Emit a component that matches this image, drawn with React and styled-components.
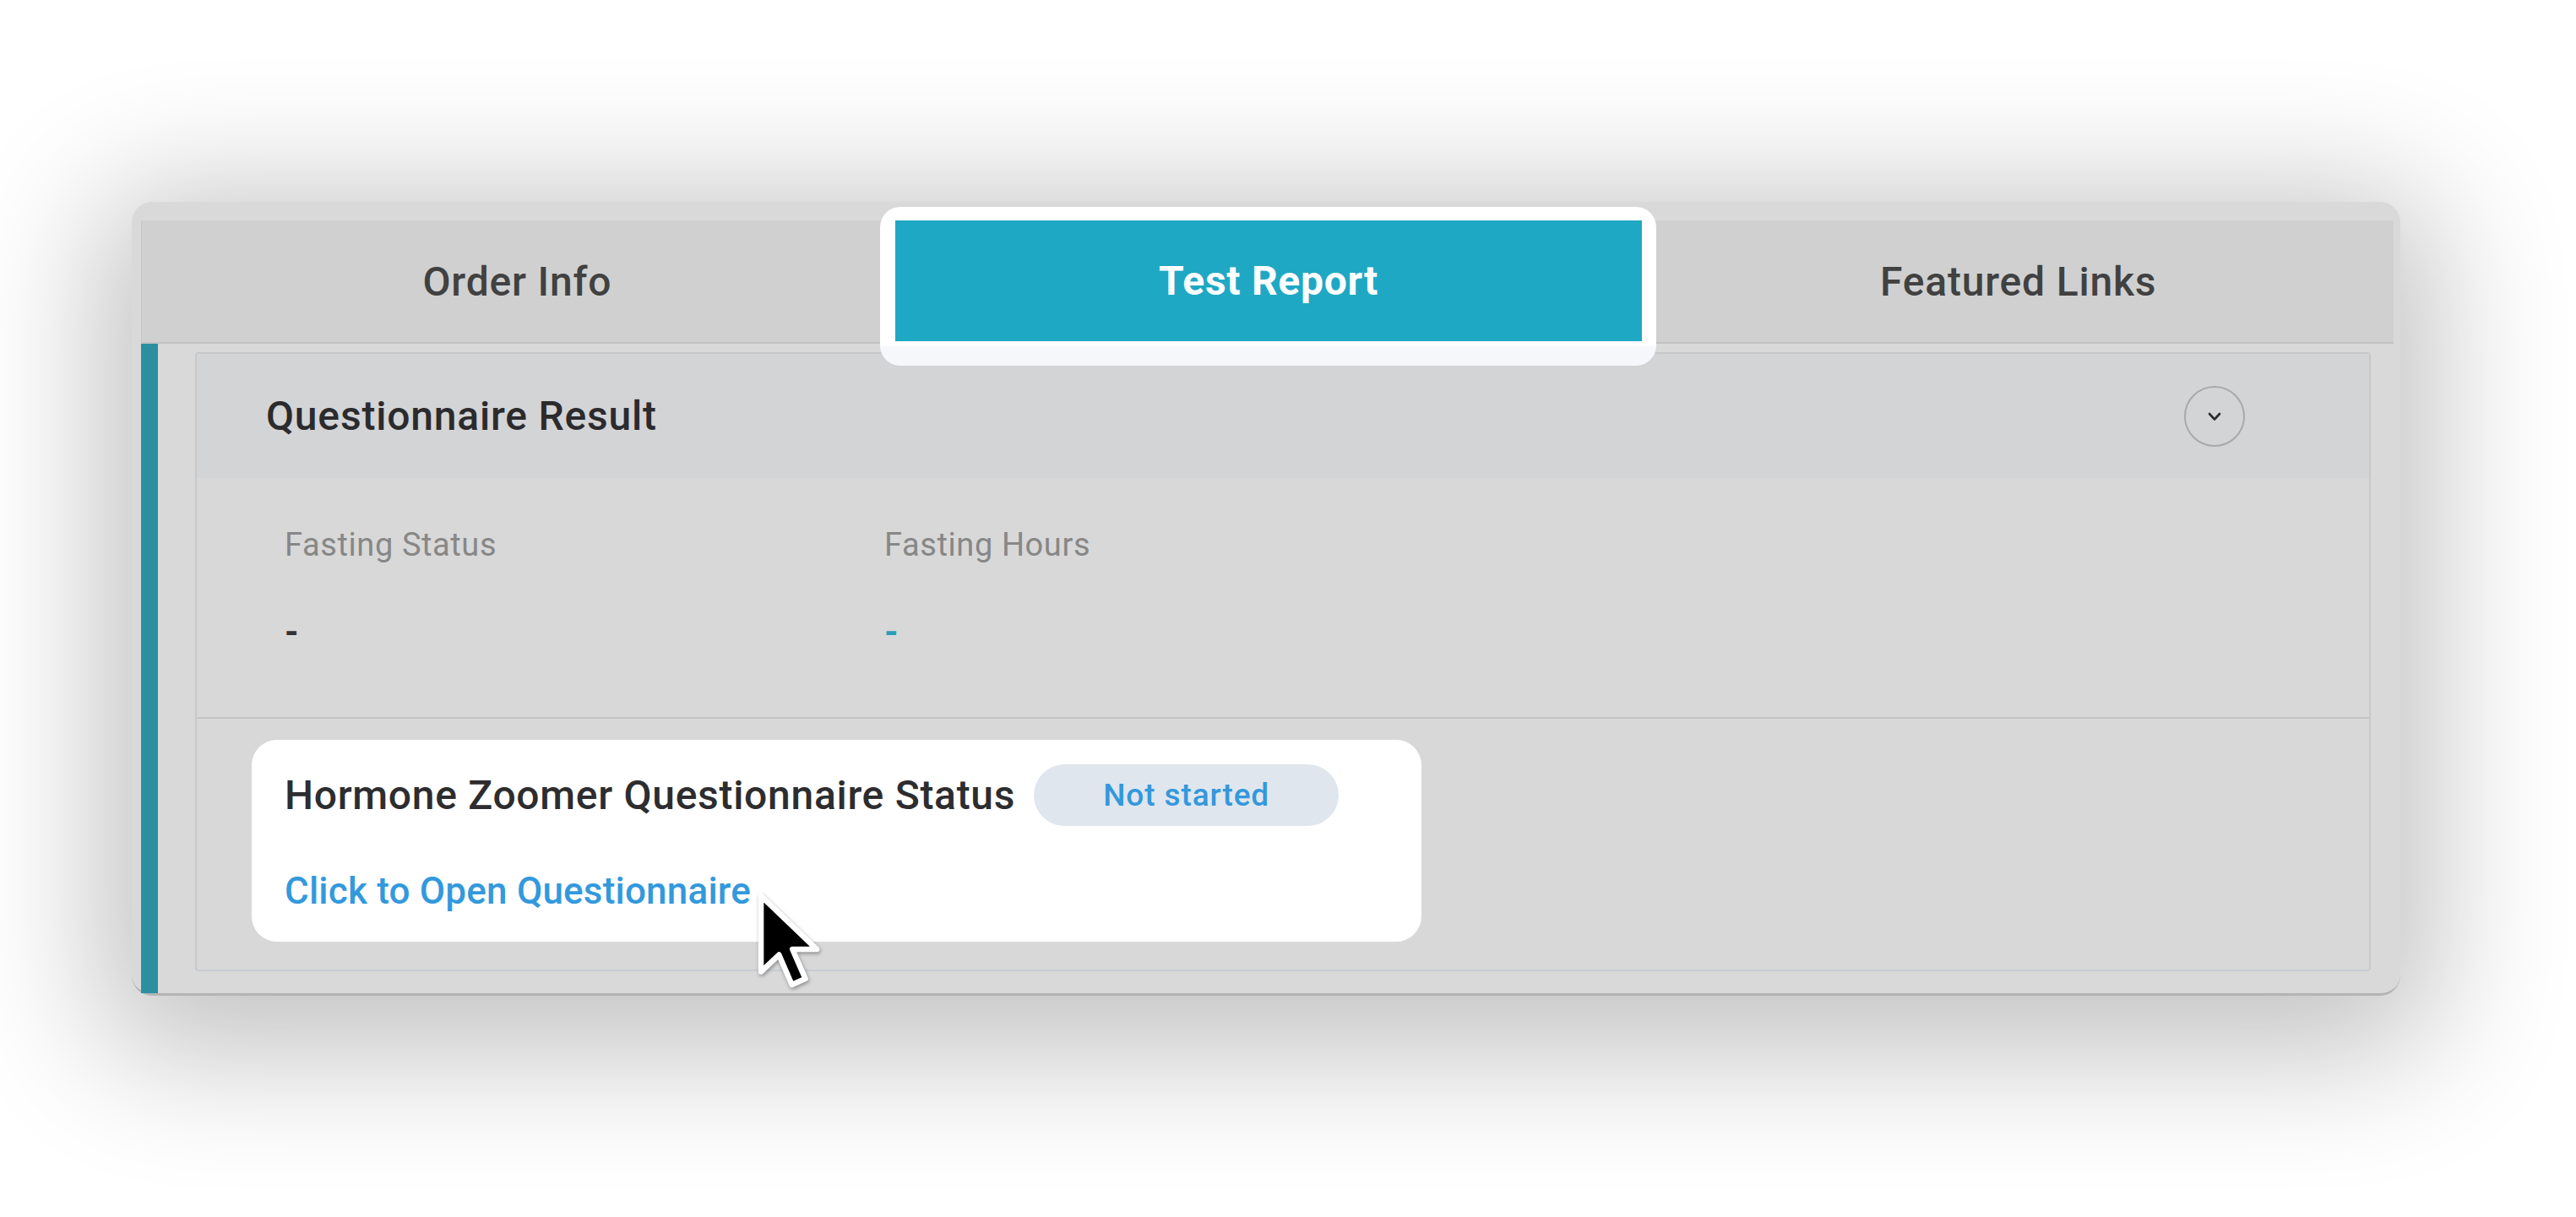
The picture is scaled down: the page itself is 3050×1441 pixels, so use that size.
import styled, { createGlobalStyle } from "styled-components";

const GlobalStyle = createGlobalStyle`
  body {
    margin: 0;
    background: #ffffff;
    font-family: Roboto, "Liberation Sans", sans-serif;
  }
`;

const TABS = ["Order Info", "Test Report", "Featured Links"];
const ACTIVE_TAB = "Test Report";

const FIELDS = [
  { label: "Fasting Status", value: "-", accent: false },
  { label: "Fasting Hours", value: "-", accent: true },
];

const Cursor = () => (
  <CursorWrap>
    <svg width="80" height="118" viewBox="0 0 13.5 20" fill="none">
      <path
        d="M1 1 L1 16.2 L4.6 12.8 L7.2 18.8 L9.9 17.6 L7.3 11.7 L12.2 11.7 Z"
        fill="#000"
        stroke="#fff"
        strokeWidth="1.1"
        strokeLinejoin="round"
      />
    </svg>
  </CursorWrap>
);

const ChevronButton = () => (
  <CircleButton>
    <svg width="16" height="11" viewBox="0 0 16 11">
      <path
        d="M2 2 L8 8.5 L14 2"
        fill="none"
        stroke="#2c2c2c"
        strokeWidth="2.6"
        strokeLinecap="round"
        strokeLinejoin="round"
      />
    </svg>
  </CircleButton>
);

const App = () => {
  return (
    <Page>
      <GlobalStyle />
      <Card>
        <TabBar>
          {TABS.map((tab) =>
            tab === ACTIVE_TAB ? (
              <ActiveTab key={tab}>
                <ActiveFace>{tab}</ActiveFace>
              </ActiveTab>
            ) : (
              <Tab key={tab}>{tab}</Tab>
            )
          )}
        </TabBar>
        <Body>
          <AccentBar />
          <Content>
            <Panel>
              <PanelHeader>
                <PanelTitle>Questionnaire Result</PanelTitle>
                <ChevronButton />
              </PanelHeader>
              <Fields>
                {FIELDS.map((f) => (
                  <Field key={f.label}>
                    <FieldLabel>{f.label}</FieldLabel>
                    <FieldValue $accent={f.accent}>{f.value}</FieldValue>
                  </Field>
                ))}
              </Fields>
              <StatusArea>
                <StatusCard>
                  <StatusRow>
                    <StatusTitle>Hormone Zoomer Questionnaire Status</StatusTitle>
                    <Pill>Not started</Pill>
                  </StatusRow>
                  <OpenLink>Click to Open Questionnaire</OpenLink>
                  <Cursor />
                </StatusCard>
              </StatusArea>
            </Panel>
          </Content>
        </Body>
      </Card>
    </Page>
  );
};

const Page = styled.div`
  width: 3050px;
  height: 1441px;
  box-sizing: border-box;
  padding: 239px 0 0 156px;
  overflow: hidden;
  background: #ffffff;
`;

const Card = styled.div`
  width: 2686px;
  height: 940px;
  box-sizing: border-box;
  display: flex;
  flex-direction: column;
  padding: 22px 8px 0 11px;
  background: #d9d9d9;
  border-radius: 24px;
  border-bottom: 3px solid #b4b4b4;
  box-shadow: 0 30px 160px 40px rgba(0, 0, 0, 0.24);
`;

const TabBar = styled.div`
  display: grid;
  grid-template-columns: repeat(3, 1fr);
  height: 146px;
  box-sizing: border-box;
  background: #d0d0d0;
  border-left: 1px solid #c6c6c6;
  border-bottom: 2px solid #c2c2c2;
`;

const Tab = styled.div`
  display: flex;
  align-items: center;
  justify-content: center;
  font-size: 48px;
  font-weight: 500;
  letter-spacing: 0.8px;
  color: #414141;
`;

const ActiveTab = styled.div`
  position: relative;
  z-index: 1;
  padding: 0 1px 1px 3px;

  &::before {
    content: "";
    position: absolute;
    inset: -16px -16px -28px -15px;
    border-radius: 24px;
    background: linear-gradient(#ffffff 0, #ffffff 88%, #f5f7fb 88%);
    z-index: -1;
  }
`;

const ActiveFace = styled.div`
  height: 100%;
  display: flex;
  align-items: center;
  justify-content: center;
  background: #1fa8c4;
  color: #ffffff;
  font-size: 48px;
  font-weight: 700;
  letter-spacing: 0.7px;
`;

const Body = styled.div`
  flex: 1;
  display: flex;
`;

const AccentBar = styled.div`
  width: 20px;
  background: #2b8f9f;
`;

const Content = styled.div`
  flex: 1;
  display: flex;
  padding: 10px 27px 26px 44px;
`;

const Panel = styled.div`
  flex: 1;
  display: flex;
  flex-direction: column;
  background: #d8d8d8;
  border: 2px solid #c8c8c8;
  border-bottom-color: #c7cbd3;
  border-radius: 4px;
`;

const PanelHeader = styled.div`
  height: 147px;
  display: flex;
  align-items: center;
  justify-content: space-between;
  padding: 0 147px 0 82px;
  background: #d3d4d6;
`;

const PanelTitle = styled.div`
  font-size: 48px;
  font-weight: 500;
  letter-spacing: 0.8px;
  color: #2b2b2d;
`;

const CircleButton = styled.div`
  width: 72px;
  height: 72px;
  box-sizing: border-box;
  border-radius: 50%;
  border: 2px solid #a9a9ab;
  display: flex;
  align-items: center;
  justify-content: center;
  padding-top: 2px;
`;

const Fields = styled.div`
  display: grid;
  grid-template-columns: 710px 710px;
  padding: 57px 0 76px 104px;
  border-bottom: 2px solid #c4c4c4;
`;

const Field = styled.div`
  display: flex;
  flex-direction: column;
  gap: 57px;
`;

const FieldLabel = styled.div`
  font-size: 38px;
  letter-spacing: 0.6px;
  color: #878787;
`;

const FieldValue = styled.div`
  font-size: 42px;
  font-weight: 700;
  color: ${(p) => (p.$accent ? "#2a9fba" : "#333333")};
`;

const StatusArea = styled.div`
  flex: 1;
  padding: 25px 0 0 65px;
`;

const StatusCard = styled.div`
  position: relative;
  width: 1385px;
  box-sizing: border-box;
  background: #ffffff;
  border-radius: 30px;
  padding: 29px 0 34px 39px;
`;

const StatusRow = styled.div`
  display: flex;
  align-items: center;
  gap: 22px;
`;

const StatusTitle = styled.div`
  font-size: 48px;
  font-weight: 500;
  letter-spacing: 0.7px;
  color: #2d2d2f;
`;

const Pill = styled.div`
  width: 361px;
  height: 73px;
  border-radius: 37px;
  background: #dfe6ee;
  color: #3398dc;
  font-size: 37px;
  font-weight: 500;
  letter-spacing: 0.9px;
  display: flex;
  align-items: center;
  justify-content: center;
`;

const OpenLink = styled.div`
  margin-top: 51px;
  font-size: 44px;
  font-weight: 500;
  letter-spacing: 0.2px;
  color: #3399dd;
  cursor: pointer;
`;

const CursorWrap = styled.div`
  position: absolute;
  left: 597px;
  top: 179px;
  line-height: 0;
  filter: drop-shadow(1px 2px 2px rgba(0, 0, 0, 0.35));
`;

export default App;
